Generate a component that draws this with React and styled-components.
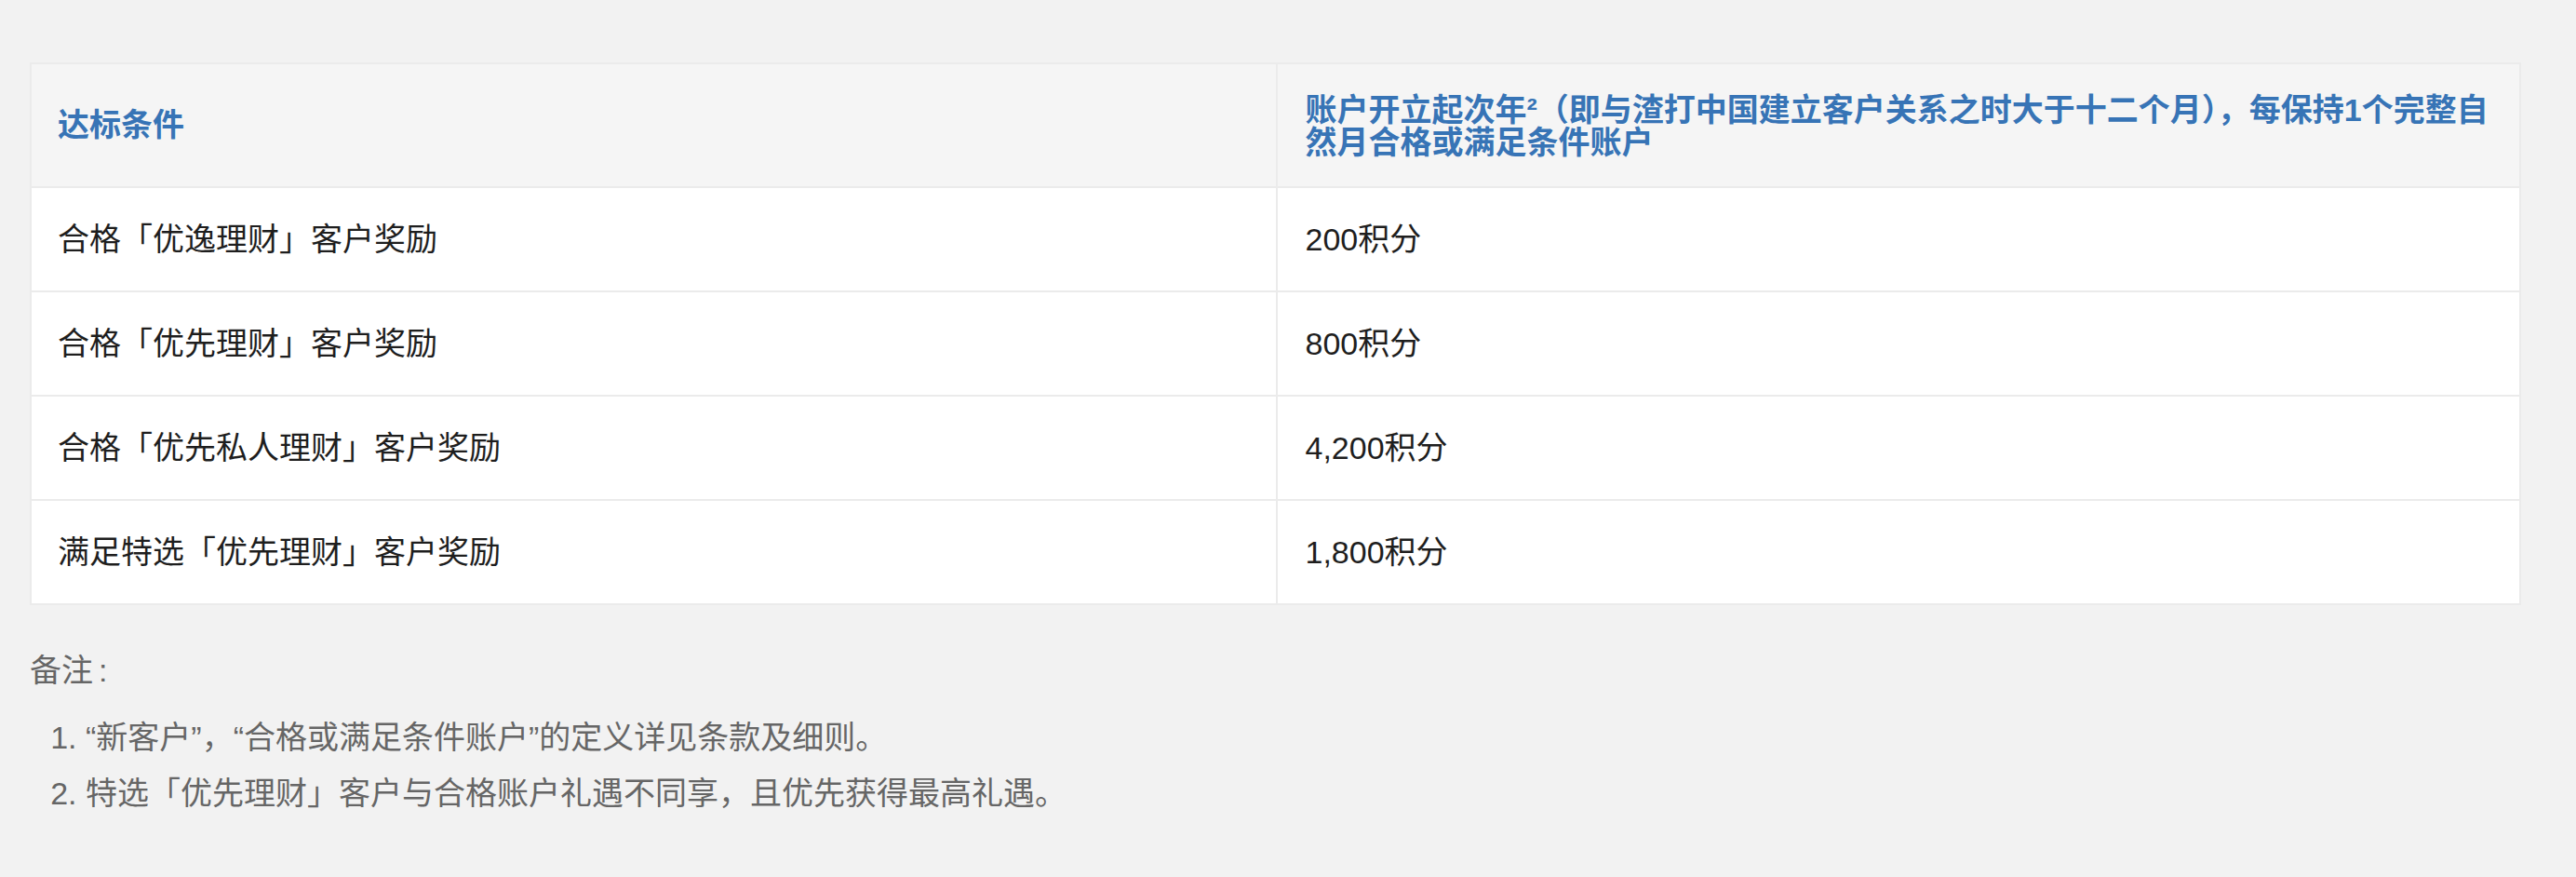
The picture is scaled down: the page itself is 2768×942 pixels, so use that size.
import React from 'react';
import styled, { createGlobalStyle } from 'styled-components';

const GlobalStyle = createGlobalStyle`
  html, body {
    margin: 0;
    padding: 0;
    background: #f2f2f2;
  }
  body {
    font-family: "Liberation Sans", "Noto Sans CJK SC", sans-serif;
  }
`;

const Page = styled.div`
  padding: 67px 59px 40px 32px;
`;

const Table = styled.div`
  border: 2px solid #ebebeb;
  background: #ffffff;
`;

const Row = styled.div`
  display: grid;
  grid-template-columns: 1fr 1fr;
  align-items: center;
  background: ${(props) => (props.head ? '#f5f5f5' : '#ffffff')};
  border-bottom: ${(props) => (props.last ? 'none' : '2px solid #ebebeb')};
  height: ${(props) => (props.head ? '131px' : '110px')};
`;

const Cell = styled.div`
  height: 100%;
  box-sizing: border-box;
  display: flex;
  align-items: center;
  padding: 0 ${(props) => (props.head ? '12px' : '30px')} 0 ${(props) => (props.second ? '30px' : '28px')};
  border-left: ${(props) => (props.second ? '2px solid #ebebeb' : 'none')};
  font-size: 34px;
  line-height: 50px;
  color: #1e1e1e;
`;

const HeadText = styled.div`
  font-size: 34px;
  line-height: 35px;
  font-weight: 700;
  color: #3774b6;
  padding-top: ${(props) => (props.multi ? '2px' : '0')};
`;

const Notes = styled.div`
  margin-top: 41px;
  color: #666666;
  font-size: 34px;
`;

const NoteTitle = styled.p`
  margin: 0 0 13px;
  line-height: 59px;
`;

const Colon = styled.span`
  margin-left: 6px;
`;

const NoteList = styled.ol`
  margin: 0;
  padding-left: 60px;
  line-height: 59.5px;
`;

const rows = [
  ['合格「优逸理财」客户奖励', '200积分'],
  ['合格「优先理财」客户奖励', '800积分'],
  ['合格「优先私人理财」客户奖励', '4,200积分'],
  ['满足特选「优先理财」客户奖励', '1,800积分'],
];

export default function App() {
  return (
    <Page>
      <GlobalStyle />
      <Table>
        <Row head>
          <Cell head>
            <HeadText>达标条件</HeadText>
          </Cell>
          <Cell head second>
            <HeadText multi>
              账户开立起次年²（即与渣打中国建立客户关系之时大于十二个月），每保持1个完整自然月合格或满足条件账户
            </HeadText>
          </Cell>
        </Row>
        {rows.map(([label, points], i) => (
          <Row key={label} last={i === rows.length - 1}>
            <Cell>{label}</Cell>
            <Cell second>{points}</Cell>
          </Row>
        ))}
      </Table>
      <Notes>
        <NoteTitle>
          备注<Colon>:</Colon>
        </NoteTitle>
        <NoteList>
          <li>“新客户”，“合格或满足条件账户”的定义详见条款及细则。</li>
          <li>特选「优先理财」客户与合格账户礼遇不同享，且优先获得最高礼遇。</li>
        </NoteList>
      </Notes>
    </Page>
  );
}
